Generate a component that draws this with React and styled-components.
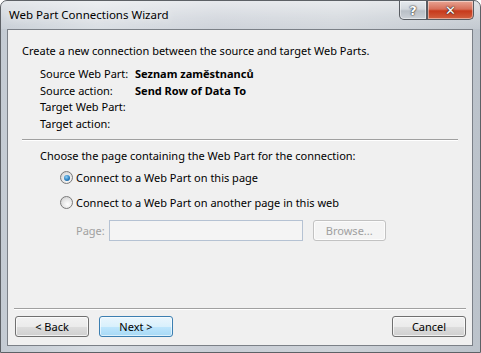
import React from 'react';
import styled, {createGlobalStyle} from 'styled-components';

const Global = createGlobalStyle`
    html, body{
        margin:0;
        padding:0;
        background:#ffffff;
    }
    body{
        font-family: "Noto Sans", "Open Sans", sans-serif;
        font-size:11px;
        color:#000;
    }
`;

const Window = styled.div`
    width:481px;
    height:353px;
    box-sizing:border-box;
    display:flex;
    flex-direction:column;
    border:1px solid #5d6166;
    border-radius:7px 7px 0 0;
    background: linear-gradient(90deg, #c4cbd3 0%, #d6dbe1 20%, #c9ced6 45%, #cdd2d8 70%, #bcc3cb 100%);
    overflow:hidden;
`;

const TitleBar = styled.div`
    height:28px;
    display:flex;
    align-items:flex-start;
    justify-content:space-between;
    padding-left:8px;
    background: linear-gradient(180deg, rgba(255,255,255,0.55) 0%, rgba(255,255,255,0.25) 60%, rgba(255,255,255,0.1) 100%);
`;

const Title = styled.div`
    margin-top:6px;
    font-size:11.5px;
    color:#000;
    text-shadow: 0 0 8px rgba(255,255,255,0.9);
`;

const Caption = styled.div`
    display:flex;
    margin-right:6px;
`;

const CapButton = styled.div`
    width:${p => p.$w}px;
    height:19px;
    box-sizing:border-box;
    display:flex;
    align-items:center;
    justify-content:center;
    border:1px solid #585c62;
    border-top:none;
    font-family: "DejaVu Sans", sans-serif;
    font-weight:bold;
    font-size:13px;
    color:#fff;
    text-shadow: 0 0 2px #333, 0 0 1px #000;
    background:${p => p.$close
        ? 'linear-gradient(180deg, #e8a493 0%, #d7705a 45%, #c7391c 55%, #d2603f 100%)'
        : 'linear-gradient(180deg, #e6eaee 0%, #d3d8dd 45%, #b9bfc6 55%, #ccd1d7 100%)'};
    border-radius:${p => p.$close ? '0 0 5px 0' : '0 0 0 5px'};
    box-shadow: inset 0 0 0 1px rgba(255,255,255,0.45);
`;

const Client = styled.div`
    flex:1;
    margin:0 7px 6px 6px;
    border:1px solid #7b8087;
    background:#f0f0f0;
    display:flex;
    flex-direction:column;
    padding:13px 0 8px;
`;

const Section = styled.div`
    padding:0 14px;
`;

const Intro = styled.div`
    line-height:16px;
`;

const Details = styled.div`
    display:grid;
    grid-template-columns:95px auto;
    row-gap:0.6px;
    margin:7px 0 0 18px;
    line-height:16px;
    white-space:nowrap;
    b{
        font-weight:bold;
    }
`;

const Rule = styled.div`
    height:1px;
    background:#a0a0a0;
    border-bottom:1px solid #ffffff;
    margin:${p => p.$m};
`;

const Prompt = styled.div`
    margin-left:18px;
    line-height:16px;
`;

const Options = styled.div`
    display:flex;
    flex-direction:column;
    gap:9px;
    margin:6px 0 0 38px;
`;

const Option = styled.label`
    display:flex;
    align-items:center;
    gap:3px;
    line-height:16px;
`;

const Radio = styled.span`
    width:11px;
    height:11px;
    border-radius:50%;
    border:1px solid #7a7a7a;
    background: radial-gradient(circle at 60% 65%, #ffffff 0%, #e6e6e6 50%, #c8c8c8 100%);
    position:relative;
    &::after{
        content:'';
        display:${p => p.$on ? 'block' : 'none'};
        position:absolute;
        left:2.5px;
        top:2.5px;
        width:6px;
        height:6px;
        border-radius:50%;
        background: radial-gradient(circle at 40% 35%, #8fd0f5 0%, #2a7fc0 55%, #0e4c88 100%);
    }
`;

const PageRow = styled.div`
    display:flex;
    align-items:center;
    margin:9px 0 0 54px;
    color:#a0a0a0;
`;

const PageInput = styled.div`
    width:192px;
    height:19px;
    margin-left:4px;
    border:1px solid #b5c2d3;
    background:#f4f4f4;
`;

const Button = styled.button`
    height:21px;
    width:${p => p.$w || 75}px;
    padding:0;
    font-family: "Noto Sans", "Open Sans", sans-serif;
    font-size:11px;
    border-radius:3px;
    border:1px solid ${p => p.$disabled ? '#c2c2c2' : p.$default ? '#3c7fb1' : '#707070'};
    color:${p => p.$disabled ? '#a0a0a0' : '#000'};
    background:${p => p.$disabled
        ? '#f4f4f4'
        : p.$default
            ? 'linear-gradient(180deg, #eaf6fd 0%, #d9f0fc 50%, #bee6fd 51%, #a7d9f5 100%)'
            : 'linear-gradient(180deg, #f2f2f2 0%, #ebebeb 50%, #dddddd 51%, #cfcfcf 100%)'};
    box-shadow: inset 0 0 0 1px ${p => p.$default ? 'rgba(255,255,255,0.6)' : 'rgba(255,255,255,0.7)'};
`;

const Browse = styled(Button)`
    margin-left:10px;
`;

const Footer = styled.div`
    display:flex;
    align-items:center;
    gap:10px;
    padding:0 6px 0 7px;
    margin-top:6px;
    .spacer{
        flex:1;
    }
`;

export default function App(){
    return(
        <>
        <Global/>
        <Window>
            <TitleBar>
                <Title>Web Part Connections Wizard</Title>
                <Caption>
                    <CapButton $w={28}>?</CapButton>
                    <CapButton $w={47} $close>✕</CapButton>
                </Caption>
            </TitleBar>
            <Client>
                <Section>
                    <Intro>Create a new connection between the source and target Web Parts.</Intro>
                    <Details>
                        <span>Source Web Part:</span><b>Seznam zaměstnanců</b>
                        <span>Source action:</span><b>Send Row of Data To</b>
                        <span>Target Web Part:</span><span></span>
                        <span>Target action:</span><span></span>
                    </Details>
                    <Rule $m="7px 0 7px"/>
                    <Prompt>Choose the page containing the Web Part for the connection:</Prompt>
                    <Options>
                        <Option><Radio $on/>Connect to a Web Part on this page</Option>
                        <Option><Radio/>Connect to a Web Part on another page in this web</Option>
                    </Options>
                    <PageRow>
                        Page:
                        <PageInput/>
                        <Browse $disabled $w={73}>Browse...</Browse>
                    </PageRow>
                </Section>
                <div style={{flex:1}}/>
                <Rule $m="0 6px 0 6px"/>
                <Footer>
                    <Button $w={74}>&lt; Back</Button>
                    <Button $w={74} $default>Next &gt;</Button>
                    <span className="spacer"/>
                    <Button $w={74}>Cancel</Button>
                </Footer>
            </Client>
        </Window>
        </>
    );
}
